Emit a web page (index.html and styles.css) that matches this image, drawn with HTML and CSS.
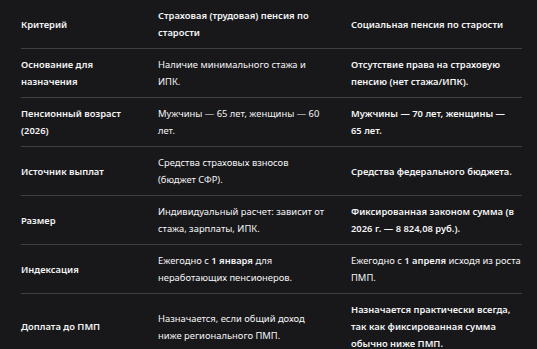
FILE: index.html
```html
<!DOCTYPE html>
<html lang="ru">
<head>
<meta charset="utf-8">
<link rel="stylesheet" href="styles.css">
</head>
<body>
<table class="cmp">
  <colgroup><col class="c1"><col class="c2"><col class="c3"></colgroup>
  <thead>
    <tr><th>Критерий</th><th>Страховая (трудовая) пенсия по<br>старости</th><th>Социальная пенсия по старости</th></tr>
  </thead>
  <tbody>
    <tr><td class="k">Основание для<br>назначения</td><td>Наличие минимального стажа и<br>ИПК.</td><td class="s">Отсутствие права на страховую<br>пенсию (нет стажа/ИПК).</td></tr>
    <tr><td class="k">Пенсионный возраст<br>(2026)</td><td>Мужчины — 65 лет, женщины — 60<br>лет.</td><td class="s">Мужчины — 70 лет, женщины —<br>65 лет.</td></tr>
    <tr><td class="k">Источник выплат</td><td>Средства страховых взносов<br>(бюджет СФР).</td><td class="s">Средства федерального бюджета.</td></tr>
    <tr><td class="k">Размер</td><td>Индивидуальный расчет: зависит от<br>стажа, зарплаты, ИПК.</td><td class="s">Фиксированная законом сумма (в<br>2026 г. — 8 824,08 руб.).</td></tr>
    <tr><td class="k">Индексация</td><td>Ежегодно с <b>1 января</b> для<br>неработающих пенсионеров.</td><td>Ежегодно с <b>1 апреля</b> исходя из роста<br>ПМП.</td></tr>
    <tr><td class="k">Доплата до ПМП</td><td>Назначается, если общий доход<br>ниже регионального ПМП.</td><td class="s">Назначается практически всегда,<br>так как фиксированная сумма<br>обычно ниже ПМП.</td></tr>
  </tbody>
</table>
</body>
</html>
```
FILE: styles.css
```css
html, body {
  margin: 0;
  background: #18181b;
}
body {
  padding: 0 15px 0 21px;
  font-family: "Noto Sans", "Open Sans", sans-serif;
  font-size: 9.4px;
  line-height: 17px;
  color: #f4f4f5;
}
.cmp {
  width: 501px;
  border-collapse: collapse;
  table-layout: fixed;
}
.c1 { width: 137px; }
.c2 { width: 193px; }
.c3 { width: 171px; }
.cmp th, .cmp td {
  text-align: left;
  vertical-align: middle;
  padding: 7px 12px 7px 0;
  font-weight: 400;
  white-space: nowrap;
}
.cmp th:last-child, .cmp td:last-child {
  padding-right: 0;
}
.cmp th, .cmp td.k, .cmp td.s, .cmp b {
  font-weight: 600;
}
.cmp tbody td {
  border-top: 1px solid #3f3f46;
}
```
